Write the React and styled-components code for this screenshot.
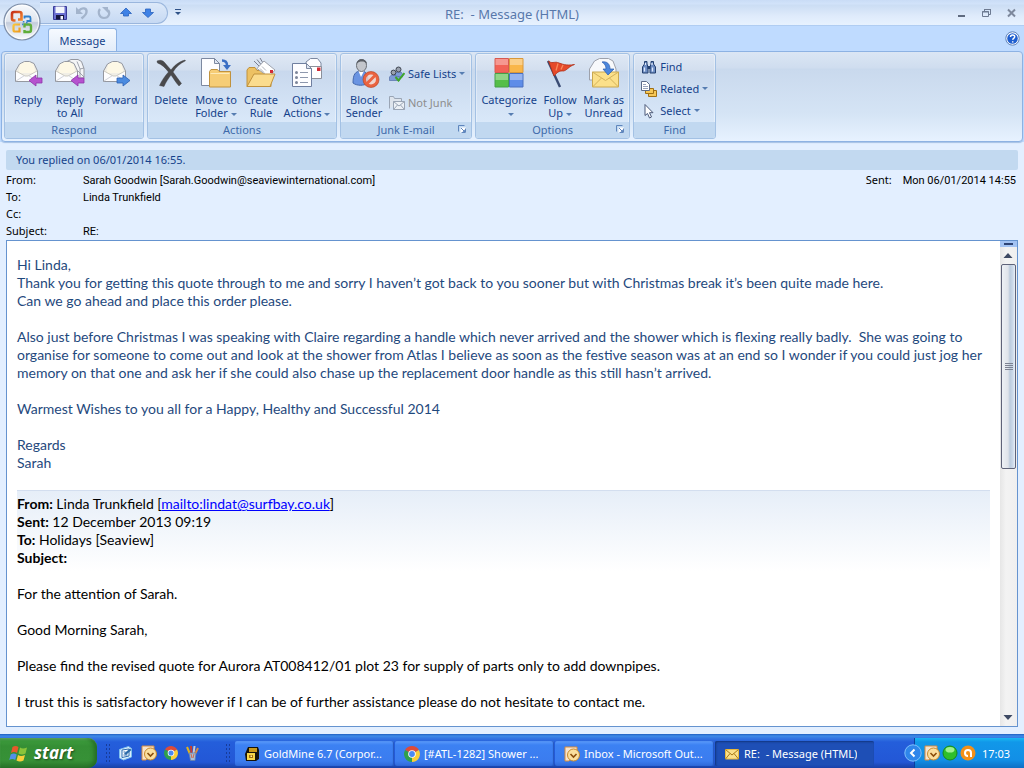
import React from 'react';
import styled, { createGlobalStyle, css } from 'styled-components';

const GlobalStyle = createGlobalStyle`
  * {
    box-sizing: border-box;
  }
  body {
    margin: 0;
    background: #e3efff;
    font-family: "Noto Sans", "Open Sans", sans-serif;
    font-size: 11px;
  }
  button {
    font: inherit;
    color: inherit;
    background: none;
    border: 0;
    padding: 0;
    cursor: pointer;
  }
`;

const Window = styled.div`
  display: flex;
  flex-direction: column;
  height: 100vh;
  overflow: hidden;
`;

/* ---------- title bar ---------- */

const TopArea = styled.header`
  position: relative;
  background: #bfdbff;
`;

const TitleBar = styled.div`
  display: grid;
  grid-template-columns: 1fr auto 1fr;
  align-items: center;
  height: 26px;
  padding-left: 40px;
  background: linear-gradient(#c9dcf6 0, #d2e3fa 4px, #cbddf4 5px, #dfebfb 16px, #e7f2ff 25px);
  border-bottom: 1px solid #b0cdf2;
`;

const OfficeButton = styled.button`
  position: absolute;
  left: 3px;
  top: 3px;
  width: 38px;
  height: 38px;
  z-index: 2;

  svg {
    display: block;
  }
`;

const QuickAccess = styled.div`
  display: flex;
  align-items: center;
`;

const QuickPill = styled.div`
  display: flex;
  align-items: center;
  gap: 6px;
  height: 22px;
  width: 128px;
  padding-left: 12px;
  background: linear-gradient(#dde9f9, #c6d9f3);
  border: 1px solid #9ab6dd;
  border-left: 0;
  border-radius: 0 11px 11px 0;

  button, svg {
    display: block;
  }
`;

const QuickMore = styled.button`
  margin-left: 5px;
  height: 16px;
  width: 10px;
`;

const Title = styled.h1`
  margin: 0;
  padding: 3px 40px 0 0;
  font-size: 13px;
  font-weight: 400;
  color: #5878ab;
  white-space: pre;
`;

const WindowButtons = styled.div`
  display: flex;
  justify-content: flex-end;
  gap: 9px;
  padding-right: 5px;

  button, svg {
    display: block;
  }
`;

const TabRow = styled.div`
  display: flex;
  justify-content: space-between;
  align-items: flex-end;
  height: 25px;
  padding: 0 4px 0 48px;
`;

const Tab = styled.button`
  height: 23px;
  width: 69px;
  font-size: 11px;
  color: #15428b;
  background: linear-gradient(#f6faff, #e2ecf9);
  border: 1px solid #8db2e3;
  border-bottom: 0;
  border-radius: 3px 3px 0 0;
`;

const HelpButton = styled.button`
  align-self: center;

  svg {
    display: block;
  }
`;

/* ---------- ribbon ---------- */

const Ribbon = styled.div`
  display: flex;
  gap: 3px;
  height: 91px;
  margin: 0 1px;
  padding: 1px 2px 0;
  background: linear-gradient(#dbe6f4 0, #cfddef 16px, #c9d9ed 17px, #d5e4f5 62px, #e7f2ff 100%);
  border: 1px solid #8db2e3;
  border-radius: 4px;
  box-shadow: 0 1px 1px #a5c0e4;
`;

const Group = styled.section`
  display: flex;
  flex-direction: column;
  height: 86px;
  border: 1px solid #a3c1e4;
  border-radius: 3px;
  background: linear-gradient(#dfe8f5 0, #d3dfef 16px, #c8d8ed 17px, #d9e8f9 68px);
  box-shadow: inset 0 0 0 1px rgba(255, 255, 255, 0.35);
  color: #15428b;
`;

const GroupBody = styled.div`
  display: flex;
  flex: 1;
  padding: 2px 3px 0;
`;

const GroupLabel = styled.h2`
  display: flex;
  justify-content: center;
  position: relative;
  margin: 0;
  height: 16px;
  line-height: 16px;
  font-size: 11px;
  font-weight: 400;
  color: #3e6aaa;
  background: #c1d8f0;
  border-radius: 0 0 2px 2px;
`;

const Launcher = styled.button`
  position: absolute;
  right: 4px;
  top: 3px;

  svg {
    display: block;
  }
`;

const BigButton = styled.button`
  display: flex;
  flex-direction: column;
  align-items: center;
  width: ${(props) => props.$width}px;
  line-height: 13px;
  text-align: center;
  white-space: nowrap;

  > svg {
    display: block;
    margin: 1px 0 4px;
  }
`;

const Caret = styled.span`
  display: inline-block;
  vertical-align: middle;
  margin: 0 0 0 3px;
  border: 3px solid transparent;
  border-top-color: #567db1;
  border-bottom: 0;
`;

const SmallColumn = styled.div`
  display: flex;
  flex-direction: column;
  gap: ${(props) => props.$gap}px;
  padding: ${(props) => props.$pad};
`;

const SmallButton = styled.button`
  display: flex;
  align-items: center;
  gap: 3px;
  height: 21px;
  white-space: nowrap;
  color: ${(props) => (props.disabled ? '#8d8d8d' : '#15428b')};

  ${Caret} {
    margin: 0;
  }
`;

/* ---------- message header ---------- */

const Message = styled.main`
  display: flex;
  flex-direction: column;
  flex: 1;
  min-height: 0;
  padding: 8px 6px 7px;
`;

const InfoBar = styled.div`
  height: 20px;
  padding-left: 10px;
  line-height: 20px;
  color: #15428b;
  background: #c2d9f0;
  border-radius: 2px;
`;

const Fields = styled.dl`
  display: grid;
  grid-template-columns: 77px 1fr auto auto;
  grid-auto-rows: 17px;
  margin: 1px 0;
  padding-right: 2px;
  line-height: 17px;
  color: #000;

  dt, dd {
    margin: 0;
  }
  dt {
    grid-column: 1;
  }
  dd {
    line-height: 19px;
    font-family: Roboto, "Noto Sans", sans-serif;
  }
`;

const SentLabel = styled.dt`
  && {
    grid-column: 3;
    padding-right: 11px;
  }
`;

/* ---------- body ---------- */

const Pane = styled.div`
  display: flex;
  flex: 1;
  min-height: 0;
  background: #fff;
  border: 1px solid #6593cf;
`;

const Content = styled.article`
  flex: 1;
  min-width: 0;
  overflow: hidden;
  padding: 15px 10px 0;
  font-family: Lato, "Open Sans", sans-serif;
  font-size: 14px;
  line-height: 18px;
  color: #000;

  p {
    margin: 0 0 18px;
  }
`;

const Letter = styled.div`
  color: #1f497d;
`;

const Quoted = styled.div`
  height: 95px;
  padding-top: 4px;
  border-top: 1px solid #d3deef;
  background: linear-gradient(#e6eef8, #fff 80px);

  a {
    color: #00f;
  }
`;

const Scroll = styled.div`
  display: flex;
  flex-direction: column;
  align-items: flex-start;
  width: 17px;
  background: linear-gradient(90deg, #e6e6e6, #f3f3f3 6px, #efefef);

  button, svg {
    display: block;
  }
`;

const SplitHandle = styled.div`
  display: flex;
  justify-content: center;
  align-items: center;
  align-self: stretch;
  height: 6px;
  background: #a3c3f3;

  &::before {
    content: '';
    width: 9px;
    height: 2px;
    background: #2d4374;
  }
`;

const Thumb = styled.div`
  display: flex;
  flex-direction: column;
  align-items: center;
  justify-content: center;
  gap: 1px;
  flex: 205 1 0;
  width: 15px;
  margin-left: 1px;
  background: linear-gradient(90deg, #eef1f5, #e0e4ea 6px, #bccbdd 8px, #cddaea 11px, #eaf0f7);
  border: 1px solid #5f6379;
  border-radius: 2px;

  i {
    width: 8px;
    height: 1px;
    background: #7d8292;
  }
`;

const Track = styled.div`
  flex: 242 1 0;
`;

/* ---------- taskbar ---------- */

const Taskbar = styled.footer`
  display: flex;
  height: 34px;
  padding-top: 4px;
  background: linear-gradient(#1f5fc0 0, #3d8ae8 2px, #3578e3 4px, #245edb 8px, #2357d6 28px, #1941a5 100%);
  color: #fff;
`;

const Start = styled.button`
  display: flex;
  align-items: center;
  flex: none;
  gap: 5px;
  width: 97px;
  padding-left: 9px;
  background: linear-gradient(#66b066 0, #3c9a3c 3px, #358f35 8px, #379137 22px, #2a752a 100%);
  border-radius: 0 9px 9px 0;
  box-shadow: inset -3px 0 4px #246c24, inset 0 1px 1px #7cc07c;
  font-family: "Open Sans", sans-serif;
  font-size: 17px;
  font-weight: 700;
  font-style: italic;
  line-height: 20px;
  text-shadow: 1px 1px 2px #1c4a1c;
`;

const Grip = styled.span`
  align-self: center;
  flex: none;
  width: 6px;
  height: 20px;
  background-image: radial-gradient(circle, #173c9b 1px, transparent 1px);
  background-size: 3px 4px;
`;

const QuickLaunch = styled.nav`
  display: flex;
  align-items: center;
  flex: none;
  gap: 7px;
  width: 128px;
  padding-left: 8px;

  button, svg {
    display: block;
  }
`;

const Tasks = styled.nav`
  display: flex;
  flex: 1;
  min-width: 0;
  gap: 1px;
  padding: 3px 0 2px 4px;
`;

const Task = styled.button`
  display: flex;
  align-items: center;
  gap: 4px;
  flex: 0 1 159px;
  min-width: 0;
  padding: 0 4px 0 9px;
  border-radius: 2px;
  background: linear-gradient(#5c9bfb 0, #3c81f3 4px, #3b7cef 20px, #2f69d9 100%);
  box-shadow: inset -1px 0 1px #2456bd;

  span {
    overflow: hidden;
    text-overflow: ellipsis;
    white-space: pre;
  }
  svg {
    flex: none;
  }
  ${(props) =>
    props.$active &&
    css`
      background: #1e4fb6;
      box-shadow: inset 1px 1px 2px #12367f;
    `}
`;

const Tray = styled.div`
  display: flex;
  align-items: center;
  flex: none;
  gap: 2px;
  width: 110px;
  margin-left: 8px;
  background: linear-gradient(#19b9f3 0, #1198e9 4px, #128fe6 22px, #0f6fc4 100%);
  border-left: 1px solid #0b3f9e;

  button, svg {
    display: block;
  }
`;

const TrayToggle = styled.button`
  margin-left: -11px;
`;

const Clock = styled.time`
  margin-left: 4px;
`;

/* ---------- icons ---------- */

const OfficeLogo = () => (
  <svg width="38" height="38" viewBox="0 0 38 38">
    <defs>
      <linearGradient id="orb" x1="0" y1="0" x2="0" y2="1">
        <stop offset="0" stopColor="#f8fafd" />
        <stop offset="0.48" stopColor="#dfe5ee" />
        <stop offset="0.52" stopColor="#c3ccdb" />
        <stop offset="1" stopColor="#fdfeff" />
      </linearGradient>
      <linearGradient id="logoRed" x1="0" y1="0" x2="1" y2="1">
        <stop offset="0" stopColor="#c5301a" />
        <stop offset="1" stopColor="#f58a2c" />
      </linearGradient>
      <linearGradient id="logoYellow" x1="0" y1="0" x2="1" y2="1">
        <stop offset="0" stopColor="#f9c63c" />
        <stop offset="1" stopColor="#ee9a1d" />
      </linearGradient>
    </defs>
    <circle cx="19" cy="19" r="18" fill="url(#orb)" stroke="#7d8ea8" strokeWidth="1.2" />
    <circle cx="19" cy="19" r="16.6" fill="none" stroke="#fff" strokeWidth="1" opacity="0.8" />
    <path d="M12.500 17.500H11a2 2 0 0 1-2-2V11a2 2 0 0 1 2-2h5.500a2 2 0 0 1 2 2v5.500h-3.500" fill="none" stroke="url(#logoRed)" strokeWidth="2.600" />
    <path d="M21.500 15.500v-2h4.500a1.500 1.500 0 0 1 1.500 1.500v3h-4" fill="none" stroke="#2f7fca" strokeWidth="1.800" />
    <path d="M17 21.500h-5a1.500 1.500 0 0 0-1.500 1.500v4a1.500 1.500 0 0 0 1.500 1.500h4.500v-4" fill="none" stroke="url(#logoYellow)" strokeWidth="2.200" />
    <path d="M21.500 24.500v-3H26a2 2 0 0 1 2 2V27a2 2 0 0 1-2 2h-4.500v-2" fill="none" stroke="#5fae3a" strokeWidth="2.400" />
    <path d="M19.800 18.800h1.600M19.800 20.600v1.600M23 19.800h1.600" stroke="#3a86c8" strokeWidth="1.400" />
  </svg>
);

const SaveIcon = () => (
  <svg width="16" height="16" viewBox="0 0 16 16">
    <path d="M1.500 1.500h13v13h-13z" fill="#6a6fd0" stroke="#3a3c98" />
    <path d="M3.500 1.500h9V8h-9z" fill="#f2f5fc" />
    <path d="M4 10h8v4.500H4z" fill="#15163f" />
    <path d="M8.500 11h2.500v3.500H8.500z" fill="#f4f6ff" />
  </svg>
);

const UndoIcon = () => (
  <svg width="16" height="16" viewBox="0 0 16 16">
    <path d="M5 5.500C8 2 13 3 12.500 7c-.3 3-2.500 4.500-5 6.500" fill="none" stroke="#a3b4cc" strokeWidth="2.400" />
    <path d="M2 2v7h7z" fill="#a3b4cc" />
  </svg>
);

const RedoIcon = () => (
  <svg width="16" height="16" viewBox="0 0 16 16">
    <path d="M4 4C1.500 7 3 13 8 13s6.500-5 4-8" fill="none" stroke="#a3b4cc" strokeWidth="2.200" />
    <path d="M6 2h6v6z" fill="#a3b4cc" />
  </svg>
);

const ArrowUp = () => (
  <svg width="16" height="16" viewBox="0 0 16 16">
    <path d="M8 3l5.500 5.500H10.500V11h-5V8.500H2.500z" fill="#3f82e6" stroke="#2a62bd" strokeWidth="0.800" />
  </svg>
);

const ArrowDown = () => (
  <svg width="16" height="16" viewBox="0 0 16 16">
    <path d="M8 12.500L2.500 7.500H5.500V4h5v3.500h3z" fill="#3f82e6" stroke="#2a62bd" strokeWidth="0.800" />
  </svg>
);

const HelpIcon = () => (
  <svg width="15" height="15" viewBox="0 0 15 15">
    <circle cx="7.500" cy="7.500" r="6.700" fill="#fff" stroke="#5b7fb8" />
    <circle cx="7.500" cy="7.500" r="5.300" fill="#1f5fd0" />
    <path d="M5.500 6c0-2.600 4.200-2.600 4.200-.2 0 1.500-2 1.600-2 3M7.700 10.200v1.400" fill="none" stroke="#fff" strokeWidth="1.500" />
  </svg>
);

const Envelope = ({ x = 0 }) => (
  <g transform={`translate(${x} 0)`}>
    <path d="M3.500 14l4-7 5-2.500h5L22 6.500l3.500 7.500v10.500h-22z" fill="#f0eee6" stroke="#9598a0" />
    <path d="M8 7.500l5-2.500h4l4.500 2.500 2 8.500h-17z" fill="#fdf8e6" />
    <path d="M4 14l8.500 5h4l8.500-5v10H4z" fill="#fdfdfe" />
    <path d="M4 14l9 5h3l9-5" fill="none" stroke="#c3c0b4" strokeWidth="0.800" />
    <path d="M4 24l8.500-5.500M25 24l-8.500-5.500" fill="none" stroke="#d0d3da" />
  </g>
);

const ReplyArrow = () => (
  <path d="M17 23.500l7-5.500V21h6v5h-6v3z" fill="#b652cf" stroke="#8d35a8" strokeWidth="0.800" />
);

const ReplyIcon = () => (
  <svg width="32" height="32" viewBox="0 0 32 32">
    <Envelope />
    <ReplyArrow />
  </svg>
);

const ReplyAllIcon = () => (
  <svg width="32" height="32" viewBox="0 0 32 32">
    <path d="M13 4.500l4-2h7l3.500 2 2.500 7v9.500H14z" fill="#f4f5f7" stroke="#9598a0" />
    <path d="M23 4.500l3 7.500 4-1M26 12v8M24 14l6 6" stroke="#8b8f9a" fill="none" strokeWidth="0.800" />
    <Envelope x={-2} />
    <ReplyArrow />
  </svg>
);

const ForwardIcon = () => (
  <svg width="32" height="32" viewBox="0 0 32 32">
    <Envelope />
    <path d="M30 23.500L23 18v3h-6v5h6v3z" fill="#4b8be0" stroke="#2b5fb4" strokeWidth="0.800" />
  </svg>
);

const DeleteIcon = () => (
  <svg width="32" height="32" viewBox="0 0 32 32">
    <path d="M2 4c4-1.500 6-.5 8 2l6 7c3-4 7-8 14-10l.5.800C25 6.500 21 10 18 15c3 4 5 7 8.500 11.500L24 29c-3-3-5-7-8-11-3 4-5 7-7 11.500l-4.500-1C7 23 10 19 13.500 15 10 10.500 7 7.500 2.500 6z" fill="#4a4a4c" stroke="#38383a" strokeWidth="0.400" />
  </svg>
);

const MoveIcon = () => (
  <svg width="32" height="32" viewBox="0 0 32 32">
    <path d="M1.500 1.500h13l5 5v22h-18z" fill="#fdfdff" stroke="#7c88a0" />
    <path d="M14.500 1.500v5h5z" fill="#dfe6f2" stroke="#7c88a0" />
    <path d="M22 3.500c4 0 5 2 5 5" fill="none" stroke="#3b6fc4" strokeWidth="2.500" />
    <path d="M23 8h8l-4 5z" fill="#3b6fc4" />
    <path d="M9.500 14.500l1.500-2h6.500l1.500 2h11.500v15.500H9.500z" fill="#f6cd76" stroke="#c0923e" />
    <path d="M10.500 16.500h19" stroke="#fdeab8" />
  </svg>
);

const RuleIcon = () => (
  <svg width="32" height="32" viewBox="0 0 32 32">
    <path d="M9 4l5 5M12 2.500l4 5M15 1l3 5" stroke="#7a7f90" />
    <path d="M2 13l2-2.500h6l2 3h14v16H2z" fill="#edc163" stroke="#c0923e" />
    <path d="M12 11.500l7-7.500 11 9-6 7z" fill="#fff" stroke="#a0a4ae" />
    <path d="M25 13h3v3h-3z" fill="#d22b35" />
    <path d="M15 11.500l4 4M17 9.500l4 4" stroke="#9aa0ab" strokeWidth="0.800" />
    <path d="M2 29.500l7-12.500h21l-5 12.500z" fill="#fbdc8e" stroke="#c0923e" />
  </svg>
);

const ActionsIcon = () => (
  <svg width="32" height="32" viewBox="0 0 32 32">
    <path d="M15 5l4.500-3.500h7L30 6v15H16z" fill="#fdfdff" stroke="#7c88a0" />
    <path d="M17.500 9.500h13v12h-13z" fill="#fff" stroke="#8b8f9a" />
    <path d="M26 10.500h3.500v3.500H26z" fill="#d22b35" />
    <path d="M1.500 6.500h14l5 5v18h-19z" fill="#fdfdff" stroke="#6f7fa0" />
    <path d="M15.500 6.500v5h5z" fill="#dfe6f2" stroke="#7c88a0" />
    <g fill="#7d869a">
      <circle cx="5.500" cy="15.500" r="1.500" />
      <circle cx="5.500" cy="20.500" r="1.500" />
      <circle cx="5.500" cy="25.500" r="1.500" />
    </g>
    <path d="M9 15.500h8M9 20.500h8M9 25.500h8" stroke="#8d97ad" />
  </svg>
);

const BlockIcon = () => (
  <svg width="32" height="32" viewBox="0 0 32 32">
    <path d="M5 26c0-8 2-12 8-12s7 4 7 12c-4 3-11 3-15 0z" fill="#6a94e2" stroke="#4568ac" />
    <path d="M10.500 14l2.500 6 3-6z" fill="#fff" />
    <ellipse cx="13.500" cy="8.500" rx="5" ry="6" fill="#c3c6cc" stroke="#6a6e75" />
    <path d="M8.500 7c0-6.500 10.500-6.500 10.500 0-2-2-3-2.500-5-2.500S10 5 8.500 7z" fill="#5a5e65" />
    <circle cx="23" cy="22.500" r="6.500" fill="#f8d5c8" fillOpacity="0.800" stroke="#ea6340" strokeWidth="3" />
    <path d="M18.500 27l9-9" stroke="#ea6340" strokeWidth="3" />
    <circle cx="23" cy="22.500" r="8" fill="none" stroke="#b0401e" strokeWidth="0.600" />
  </svg>
);

const SafeIcon = () => (
  <svg width="16" height="16" viewBox="0 0 16 16">
    <path d="M.5 14.500V11l2-2h6l2 2v3.500z" fill="#7d9bd6" stroke="#4a64a0" strokeWidth="0.600" />
    <path d="M6 10V8l2-2h4l1.500 2v3z" fill="#7d9bd6" stroke="#4a64a0" strokeWidth="0.600" />
    <circle cx="4.500" cy="6.500" r="2.400" fill="#9aa2ae" stroke="#3d4450" />
    <circle cx="9.500" cy="3.500" r="2.500" fill="#9aa2ae" stroke="#3d4450" />
    <path d="M6.500 11l3 3.500L15.500 7" fill="none" stroke="#3ea629" strokeWidth="2" />
  </svg>
);

const NotJunkIcon = () => (
  <svg width="16" height="16" viewBox="0 0 16 16">
    <path d="M.5 13.500v-12h4l1 2h7v3" fill="#dee4ec" stroke="#9aa5b5" />
    <path d="M4.500 6.500h11v8h-11z" fill="#edf1f6" stroke="#9aa5b5" />
    <path d="M4.500 6.500l5.500 4.500 5.500-4.500M4.500 14.500L8.500 10M15.500 14.500L11.500 10" fill="none" stroke="#9aa5b5" />
  </svg>
);

const CategorizeIcon = () => (
  <svg width="32" height="32" viewBox="0 0 32 32">
    <path d="M2 1.500h13.500v14H2z" fill="#f26257" stroke="#d65a50" />
    <path d="M16.500 1.500H30v14H16.500z" fill="#f9b64a" stroke="#d8983c" />
    <path d="M2 16.500h13.500v13.500H2z" fill="#55be48" stroke="#45a048" />
    <path d="M16.500 16.500H30v13.500H16.500z" fill="#5e8de8" stroke="#4a70c0" />
    <g fill="#fff" opacity="0.350">
      <path d="M2.500 2H15v6H2.500zM17 2h12.500v6H17zM2.500 17H15v6H2.500zM17 17h12.500v6H17z" />
    </g>
  </svg>
);

const FlagIcon = () => (
  <svg width="32" height="32" viewBox="0 0 32 32">
    <path d="M4 4l12 26" stroke="#3a4c74" strokeWidth="2.400" />
    <path d="M4.500 4c3 3 6 .5 9 1.500 5 1.500 8 3.500 17 2-6 2-7 5.500-11 6.500-4-.5-6 1-9.500 5z" fill="#e54a2a" stroke="#b03018" strokeWidth="0.800" />
    <path d="M14 6.500l-2 7M19 8l-2 4.500" stroke="#f98a5c" strokeWidth="1.300" />
  </svg>
);

const UnreadIcon = () => (
  <svg width="32" height="32" viewBox="0 0 32 32">
    <path d="M1.500 12l5-8 5-2.500h9L25 4l3 8v11h-26.500z" fill="#f8f9fb" stroke="#9da1ab" />
    <path d="M4.500 15h26v15h-26z" fill="#fbe08a" stroke="#c9a850" />
    <path d="M4.500 15l13 8.500 13-8.500M4.500 30l9-9M30.500 30l-9-9" fill="none" stroke="#d3b25a" />
    <path d="M14 5c5-1 8 2 8 7h4l-6 6-5-6h3c0-3-1-5-4-7z" fill="#4b86dc" stroke="#2a5cae" strokeWidth="0.700" />
  </svg>
);

const FindIcon = () => (
  <svg width="16" height="16" viewBox="0 0 16 16">
    <path d="M3.500 2.500h2.500V5l1 3v6H1.500V8l2-3zM10 2.500h2.500V5l2 3v6H9V8l1-3z" fill="#6d8dc4" stroke="#24406f" />
    <path d="M6.500 7h3v3h-3z" fill="#24406f" />
    <path d="M3.500 8.500v4M11.500 8.500v4M4.500 4v2M11 4v2" stroke="#dfeafc" strokeWidth="1.300" />
  </svg>
);

const RelatedIcon = () => (
  <svg width="16" height="16" viewBox="0 0 16 16">
    <path d="M7.500 8.500h3l1 1h4v6h-8z" fill="#f6c757" stroke="#a06f14" />
    <path d="M4.500 6.500h3l1 1h4v5h-8z" fill="#f6c757" stroke="#a06f14" />
    <path d="M.5.500h5l3 3v6h-8z" fill="#fff" stroke="#5d6b88" />
    <path d="M2 3.500h3M2 5.500h5M2 7.500h5" stroke="#7d8cab" strokeWidth="0.800" />
  </svg>
);

const SelectIcon = () => (
  <svg width="16" height="16" viewBox="0 0 16 16">
    <path d="M4 1.500v11l2.500-2 2 4.500 2-1-2-4.300H12z" fill="#fff" stroke="#4a5878" />
  </svg>
);

const LauncherIcon = () => (
  <svg width="9" height="9" viewBox="0 0 9 9">
    <path d="M.5 6.500v-6h6" fill="none" stroke="#5f86bd" />
    <path d="M2.500 2.500h5.500v5.500H2.500z" fill="#fff" />
    <path d="M3 3l3 3M3.500 7.500h4v-4" fill="none" stroke="#5f86bd" />
    <path d="M4.500 7h2.500V4.500z" fill="#5f86bd" />
  </svg>
);

const OutlookIcon = ({ size = 16 }) => (
  <svg width={size} height={size} viewBox="0 0 16 16">
    <path d="M1 1h12v4L5 15H1z" fill="#f8e3cb" stroke="#d38a3f" />
    <circle cx="9.500" cy="9" r="6" fill="#fbdf9e" stroke="#c9892a" />
    <path d="M6.500 8l3 3 3-3" fill="none" stroke="#8a4d0c" strokeWidth="1.600" />
  </svg>
);

const ChromeIcon = ({ size = 14 }) => (
  <svg width={size} height={size} viewBox="0 0 16 16">
    <path d="M8 8L1.100 4A8 8 0 0 1 14.900 4z" fill="#dd4b39" />
    <path d="M8 8l6.900-4A8 8 0 0 1 8 16z" fill="#f9cf3a" />
    <path d="M8 8v8A8 8 0 0 1 1.100 4z" fill="#2fa04c" />
    <circle cx="8" cy="8" r="3.800" fill="#fff" />
    <circle cx="8" cy="8" r="2.900" fill="#4a8af4" />
  </svg>
);

const DesktopIcon = () => (
  <svg width="16" height="16" viewBox="0 0 16 16">
    <path d="M1.500 4.500l9-3 3 2v8.500l-8 3-4-2z" fill="#dceefb" stroke="#7fc0ee" />
    <path d="M4 5l7-1v7l-7 1.500z" fill="#fff" stroke="#2d6db0" />
    <path d="M6 8.500l6-5 1.500 1.500L8 10z" fill="#2b6aa8" />
    <path d="M5.500 7h2M5.500 10h4" stroke="#2d6db0" />
  </svg>
);

const PaintIcon = () => (
  <svg width="16" height="16" viewBox="0 0 16 16">
    <path d="M5 9L2 2" stroke="#e2b21c" strokeWidth="2" />
    <path d="M6.500 9L6 1" stroke="#cd3e2b" strokeWidth="2" />
    <path d="M8.500 9l1-8" stroke="#c4ccd8" strokeWidth="2" />
    <path d="M10 9l3-6" stroke="#d98c3f" strokeWidth="2" />
    <path d="M4 8h7l-1 7.500H5.500z" fill="#a9bdd6" stroke="#6480a8" strokeWidth="0.800" />
    <path d="M6 9l1 4M9 9l-1 4" stroke="#cd6a4b" />
  </svg>
);

const GoldmineIcon = () => (
  <svg width="16" height="16" viewBox="0 0 16 16">
    <path d="M4 1h10l1 3v9l-3 2H2L1 8z" fill="#17130a" />
    <path d="M5 2h8v4H5z" fill="#c89a1c" />
    <path d="M3 7h8v7H3z" fill="#f6d74a" />
    <path d="M5 9h4v3H5z" fill="#a36f0c" />
    <path d="M6.500 9.500h1.500v1.500H6.500z" fill="#fdf0a8" />
  </svg>
);

const MailIcon = () => (
  <svg width="16" height="14" viewBox="0 0 16 14">
    <path d="M1.500 2.500h13v9.500h-13z" fill="#fbe08a" stroke="#e9b93e" />
    <path d="M1.500 2.500L8 8l6.500-5.500M1.500 12L6 6.500M14.500 12L10 6.500" fill="none" stroke="#a97916" />
  </svg>
);

const WindowsFlag = () => (
  <svg width="20" height="19" viewBox="0 0 20 19">
    <path d="M3.500 3c2-1.500 4-1.500 6 0L8 9c-2-1.500-4-1.500-6 0z" fill="#e8592b" />
    <path d="M11 3.500c2 1.200 4 1.200 7 0L16.500 9.500c-2.500 1.300-4.500 1.300-7 0z" fill="#8ac43a" />
    <path d="M1.700 10.500c2-1.500 4-1.500 6 0L6.200 16c-2-1.500-4-1.500-6 0z" fill="#5390e8" />
    <path d="M9 11c2 1.200 4 1.200 7 0L14.500 16.500c-2.500 1.300-4.500 1.300-7 0z" fill="#f9cf3a" />
  </svg>
);

const Triangle = ({ down }) => (
  <svg width="16" height="17" viewBox="0 0 16 17">
    <path d={down ? 'M3.500 6h9L8 11z' : 'M3.500 11h9L8 6z'} fill="#3d4963" />
  </svg>
);

/* ---------- pieces ---------- */

const Big = ({ icon, width, children }) => (
  <BigButton type="button" $width={width}>
    {icon}
    <span>{children}</span>
  </BigButton>
);

const RibbonGroup = ({ label, launcher, children }) => (
  <Group>
    <GroupBody>{children}</GroupBody>
    <GroupLabel>
      {label}
      {launcher && (
        <Launcher type="button" aria-label={`${label} options`}>
          <LauncherIcon />
        </Launcher>
      )}
    </GroupLabel>
  </Group>
);

function App() {
  return (
    <>
      <GlobalStyle />
      <Window>
        <TopArea>
          <OfficeButton type="button" aria-label="Office">
            <OfficeLogo />
          </OfficeButton>
          <TitleBar>
            <QuickAccess>
              <QuickPill>
                <button type="button" aria-label="Save"><SaveIcon /></button>
                <button type="button" aria-label="Undo"><UndoIcon /></button>
                <button type="button" aria-label="Redo"><RedoIcon /></button>
                <button type="button" aria-label="Previous item"><ArrowUp /></button>
                <button type="button" aria-label="Next item"><ArrowDown /></button>
              </QuickPill>
              <QuickMore type="button" aria-label="Customize">
                <svg width="8" height="10" viewBox="0 0 8 10">
                  <path d="M1 2.500h6" stroke="#2f5288" />
                  <path d="M1 5h6L4 8z" fill="#2f5288" />
                </svg>
              </QuickMore>
            </QuickAccess>
            <Title>RE:  - Message (HTML)</Title>
            <WindowButtons>
              <button type="button" aria-label="Minimize">
                <svg width="16" height="16" viewBox="0 0 16 16">
                  <path d="M5 11h7" stroke="#5f6b80" strokeWidth="2" />
                </svg>
              </button>
              <button type="button" aria-label="Restore">
                <svg width="16" height="16" viewBox="0 0 16 16">
                  <path d="M6.500 6V4.500h6v5H11M6 4.500h7" fill="none" stroke="#6d7a91" />
                  <path d="M4.500 6.500h6v5h-6zM4 7h7" fill="none" stroke="#6d7a91" />
                </svg>
              </button>
              <button type="button" aria-label="Close">
                <svg width="16" height="16" viewBox="0 0 16 16">
                  <path d="M5 4.500l7 7M12 4.500l-7 7" stroke="#7d889c" strokeWidth="2" />
                </svg>
              </button>
            </WindowButtons>
          </TitleBar>
          <TabRow>
            <Tab type="button">Message</Tab>
            <HelpButton type="button" aria-label="Help"><HelpIcon /></HelpButton>
          </TabRow>
          <Ribbon>
            <RibbonGroup label="Respond">
              <Big width={40} icon={<ReplyIcon />}>Reply</Big>
              <Big width={44} icon={<ReplyAllIcon />}>Reply<br />to All</Big>
              <Big width={48} icon={<ForwardIcon />}>Forward</Big>
            </RibbonGroup>
            <RibbonGroup label="Actions">
              <Big width={40} icon={<DeleteIcon />}>Delete</Big>
              <Big width={50} icon={<MoveIcon />}>Move to<br />Folder<Caret /></Big>
              <Big width={40} icon={<RuleIcon />}>Create<br />Rule</Big>
              <Big width={52} icon={<ActionsIcon />}>Other<br />Actions<Caret /></Big>
            </RibbonGroup>
            <RibbonGroup label="Junk E-mail" launcher>
              <Big width={40} icon={<BlockIcon />}>Block<br />Sender</Big>
              <SmallColumn $gap={8} $pad="7px 3px 0 5px">
                <SmallButton type="button"><SafeIcon />Safe Lists<Caret /></SmallButton>
                <SmallButton type="button" disabled><NotJunkIcon />Not Junk</SmallButton>
              </SmallColumn>
            </RibbonGroup>
            <RibbonGroup label="Options" launcher>
              <Big width={60} icon={<CategorizeIcon />}>Categorize<br /><Caret /></Big>
              <Big width={42} icon={<FlagIcon />}>Follow<br />Up<Caret /></Big>
              <Big width={45} icon={<UnreadIcon />}>Mark as<br />Unread</Big>
            </RibbonGroup>
            <RibbonGroup label="Find">
              <SmallColumn $gap={1} $pad="0 4px">
                <SmallButton type="button"><FindIcon />Find</SmallButton>
                <SmallButton type="button"><RelatedIcon />Related<Caret /></SmallButton>
                <SmallButton type="button"><SelectIcon />Select<Caret /></SmallButton>
              </SmallColumn>
            </RibbonGroup>
          </Ribbon>
        </TopArea>

        <Message>
          <InfoBar>You replied on 06/01/2014 16:55.</InfoBar>
          <Fields>
            <dt>From:</dt>
            <dd>Sarah Goodwin [Sarah.Goodwin@seaviewinternational.com]</dd>
            <SentLabel>Sent:</SentLabel>
            <dd>Mon 06/01/2014 14:55</dd>
            <dt>To:</dt>
            <dd>Linda Trunkfield</dd>
            <dt>Cc:</dt>
            <dd />
            <dt>Subject:</dt>
            <dd>RE:</dd>
          </Fields>
          <Pane>
            <Content>
              <Letter>
                <p>
                  Hi Linda,<br />
                  Thank you for getting this quote through to me and sorry I haven’t got back to you sooner but with Christmas break it’s been quite made here.<br />
                  Can we go ahead and place this order please.
                </p>
                <p>
                  Also just before Christmas I was speaking with Claire regarding a handle which never arrived and the shower which is flexing really badly.&nbsp; She was going to organise for someone to come out and look at the shower from Atlas I believe as soon as the festive season was at an end so I wonder if you could just jog her memory on that one and ask her if she could also chase up the replacement door handle as this still hasn’t arrived.
                </p>
                <p>Warmest Wishes to you all for a Happy, Healthy and Successful 2014</p>
                <p>Regards<br />Sarah</p>
              </Letter>
              <Quoted>
                <b>From:</b> Linda Trunkfield [<a href="mailto:lindat@surfbay.co.uk">mailto:lindat@surfbay.co.uk</a>]<br />
                <b>Sent:</b> 12 December 2013 09:19<br />
                <b>To:</b> Holidays [Seaview]<br />
                <b>Subject:</b>
              </Quoted>
              <p>For the attention of Sarah.</p>
              <p>Good Morning Sarah,</p>
              <p>Please find the revised quote for Aurora AT008412/01 plot 23 for supply of parts only to add downpipes.</p>
              <p>I trust this is satisfactory however if I can be of further assistance please do not hesitate to contact me.</p>
            </Content>
            <Scroll>
              <SplitHandle />
              <button type="button" aria-label="Scroll up"><Triangle /></button>
              <Thumb><i /><i /><i /><i /></Thumb>
              <Track />
              <button type="button" aria-label="Scroll down"><Triangle down /></button>
            </Scroll>
          </Pane>
        </Message>

        <Taskbar>
          <Start type="button"><WindowsFlag />start</Start>
          <QuickLaunch>
            <Grip />
            <button type="button" aria-label="Show desktop"><DesktopIcon /></button>
            <button type="button" aria-label="Outlook"><OutlookIcon /></button>
            <button type="button" aria-label="Chrome"><ChromeIcon /></button>
            <button type="button" aria-label="Paint"><PaintIcon /></button>
          </QuickLaunch>
          <Grip />
          <Tasks>
            <Task type="button"><GoldmineIcon /><span>GoldMine 6.7 (Corpor...</span></Task>
            <Task type="button"><ChromeIcon size={16} /><span>[#ATL-1282] Shower ...</span></Task>
            <Task type="button"><OutlookIcon /><span>Inbox - Microsoft Out...</span></Task>
            <Task type="button" $active><MailIcon /><span>RE:  - Message (HTML)</span></Task>
          </Tasks>
          <Tray>
            <TrayToggle type="button" aria-label="Show hidden icons">
              <svg width="18" height="18" viewBox="0 0 18 18">
                <circle cx="9" cy="9" r="8.200" fill="#2f86ea" stroke="#7fc0fb" />
                <path d="M10.500 5.500L7 9l3.500 3.500" fill="none" stroke="#fff" strokeWidth="2" />
              </svg>
            </TrayToggle>
            <OutlookIcon />
            <svg width="16" height="16" viewBox="0 0 16 16">
              <circle cx="8" cy="8" r="7" fill="#2fbf2a" stroke="#178a18" />
              <ellipse cx="8" cy="4.800" rx="4.500" ry="2.800" fill="#9ff08f" />
            </svg>
            <svg width="16" height="16" viewBox="0 0 16 16">
              <circle cx="8" cy="8" r="7.500" fill="#f39019" />
              <path d="M11 12V8a3 3 0 1 0-3 3" fill="none" stroke="#fff" strokeWidth="2" />
            </svg>
            <Clock>17:03</Clock>
          </Tray>
        </Taskbar>
      </Window>
    </>
  );
}

export default App;
